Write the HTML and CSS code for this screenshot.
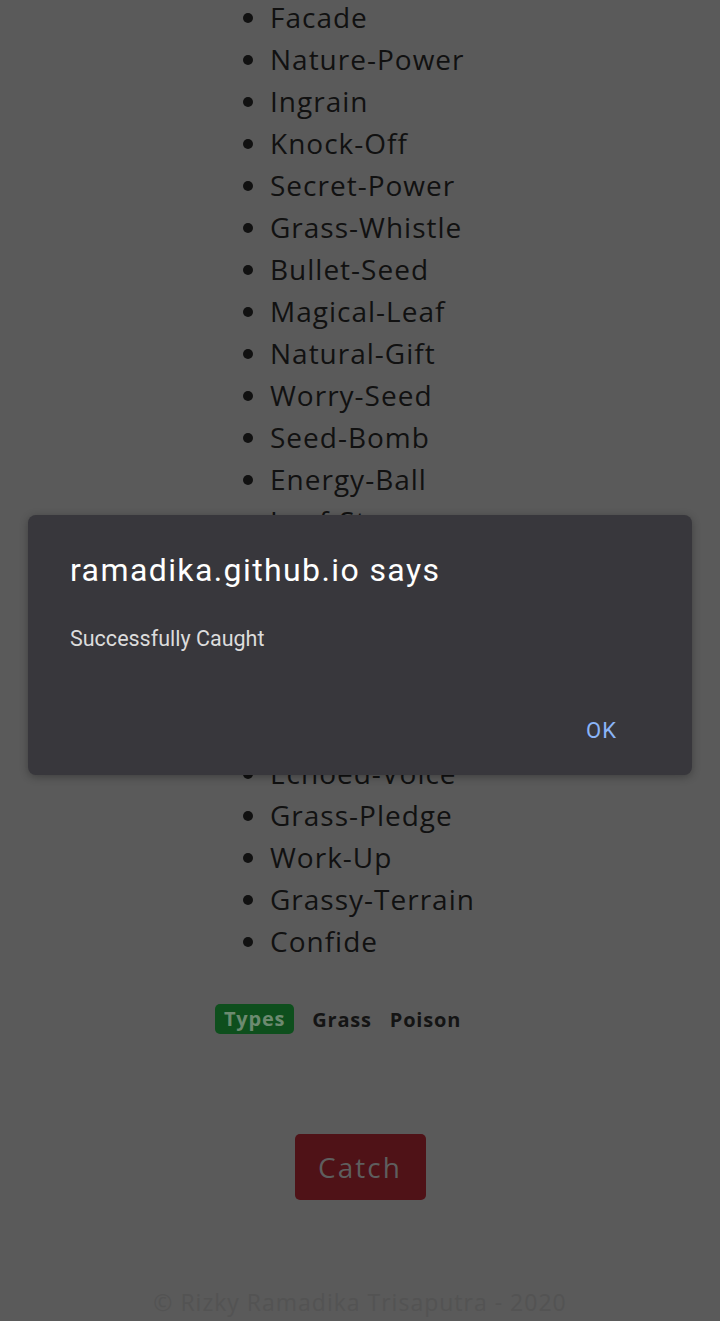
FILE: index.html
```html
<!DOCTYPE html>
<html>
<head>
<meta charset="utf-8">
<link rel="stylesheet" href="styles.css">
</head>
<body>
<main class="page">
  <ul class="moves">
    <li>Facade</li>
    <li>Nature-Power</li>
    <li>Ingrain</li>
    <li>Knock-Off</li>
    <li>Secret-Power</li>
    <li>Grass-Whistle</li>
    <li>Bullet-Seed</li>
    <li>Magical-Leaf</li>
    <li>Natural-Gift</li>
    <li>Worry-Seed</li>
    <li>Seed-Bomb</li>
    <li>Energy-Ball</li>
    <li>Leaf-Storm</li>
    <li>Power-Whip</li>
    <li>Captivate</li>
    <li>Grass-Knot</li>
    <li>Venoshock</li>
    <li>Round</li>
    <li>Echoed-Voice</li>
    <li>Grass-Pledge</li>
    <li>Work-Up</li>
    <li>Grassy-Terrain</li>
    <li>Confide</li>
  </ul>
  <div class="types">
    <span class="badge">Types</span>
    <span class="type">Grass</span>
    <span class="type">Poison</span>
  </div>
  <div class="actions">
    <button class="catch">Catch</button>
  </div>
  <footer class="footer">© Rizky Ramadika Trisaputra - 2020</footer>
</main>
<div class="dialog">
  <div class="dialog-title">ramadika.github.io says</div>
  <div class="dialog-msg">Successfully Caught</div>
  <div class="dialog-actions"><span class="ok">OK</span></div>
</div>
</body>
</html>
```

FILE: styles.css
```css
html, body {
  margin: 0;
  padding: 0;
  background: #5a5a5a;
  height: 1321px;
  overflow: hidden;
}
.page {
  font-family: "Open Sans", "Noto Sans", sans-serif;
  color: #111111;
  display: flex;
  flex-direction: column;
  align-items: center;
}
.moves {
  margin: -4px 0 0 0;
  padding: 0 0 0 40px;
  align-self: flex-start;
  margin-left: 230px;
  font-size: 28px;
  line-height: 42px;
  letter-spacing: 1px;
}
.types {
  margin-top: 42px;
  display: flex;
  align-items: center;
  gap: 18px;
  margin-left: -44px;
  font-weight: 700;
  font-size: 20px;
  letter-spacing: 0.8px;
}
.badge {
  background: #0e4f1d;
  color: #6c8a70;
  border-radius: 5px;
  padding: 0 9px;
  height: 30px;
  line-height: 30px;
}
.type {
  color: #141414;
}
.actions {
  margin-top: 100px;
}
.catch {
  font-family: "Open Sans", sans-serif;
  font-size: 28px;
  letter-spacing: 2px;
  line-height: 60px;
  color: #5e5e5e;
  background: #4f1217;
  border: none;
  border-radius: 5px;
  width: 131px;
  height: 66px;
}
.footer {
  margin-top: 86px;
  font-size: 23px;
  letter-spacing: 1px;
  color: #535353;
}
.dialog {
  position: absolute;
  left: 28px;
  top: 515px;
  width: 664px;
  height: 260px;
  box-sizing: border-box;
  background: #38373c;
  border-radius: 8px;
  box-shadow: 0 2px 8px rgba(0,0,0,0.3);
  padding: 35px 42px 0 42px;
  display: flex;
  flex-direction: column;
  font-family: Roboto, "Noto Sans", sans-serif;
}
.dialog-title {
  color: #ffffff;
  font-size: 32px;
  letter-spacing: 1.4px;
  line-height: 40px;
}
.dialog-msg {
  margin-top: 36px;
  color: #dcdcdc;
  font-size: 21.5px;
  line-height: 26px;
}
.dialog-actions {
  margin-top: 66px;
  display: flex;
  justify-content: flex-end;
  padding-right: 33px;
}
.ok {
  color: #8ab4f8;
  font-size: 22px;
  letter-spacing: 1px;
}
```
